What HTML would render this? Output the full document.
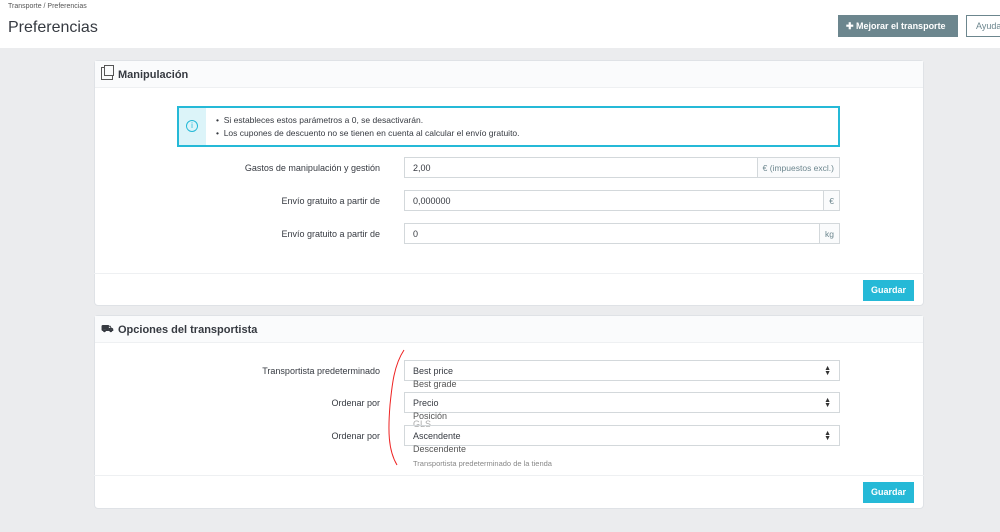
<!DOCTYPE html><html><head><style>
*{box-sizing:border-box;margin:0;padding:0}
body{width:1000px;height:532px;background:#ebecee;font-family:"Liberation Sans",sans-serif;color:#363a41;position:relative;overflow:hidden}
.abs{position:absolute}
.hdr{left:0;top:0;width:1000px;height:48px;background:#fff}
.panel{background:#fff;border:1px solid #dfe2e6;border-radius:4px;left:94px;width:830px}
.ph{position:absolute;left:0;top:0;right:0;height:27px;background:#fafbfc;border-bottom:1px solid #eef0f2;font-size:11px;font-weight:bold;padding:8px 0 0 23px}
.lbl{font-size:9px;text-align:right;width:240px;left:140px}
.inp{left:404px;width:436px;height:21px;border:1px solid #d3d8db;font-size:9px;padding:5px 8px;color:#363a41}
.addon{position:absolute;right:0;top:0;height:19px;border-left:1px solid #d3d8db;background:#fafbfc;font-size:8.5px;padding:5px 5px;color:#6c868e}
.btn{left:863px;width:51px;height:21px;background:#25b9d7;color:#fff;font-size:9px;font-weight:bold;text-align:center;line-height:21px}
.foot{left:94px;width:830px;height:1px;background:#eef0f2}
.opt{font-size:9px;color:#555;left:413px}
.arr{position:absolute;right:8px;top:5px;font-size:7px;line-height:5px;color:#333}
</style></head><body>
<div class="abs hdr"></div>
<div class="abs" style="left:8px;top:3px;font-size:7px;color:#555">Transporte / Preferencias</div>
<div class="abs" style="left:8px;top:19px;font-size:16px;color:#363a41">Preferencias</div>
<div class="abs" style="left:838px;top:15px;width:120px;height:22px;background:#6c868e;color:#fff;font-size:9px;font-weight:bold;line-height:22px;padding-left:8px">✚ Mejorar el transporte</div>
<div class="abs" style="left:966px;top:15px;width:40px;height:22px;border:1px solid #6c868e;background:#fff;color:#6c868e;font-size:9px;line-height:20px;padding-left:9px">Ayuda</div>

<div class="abs panel" style="top:60px;height:246px">
<div class="ph"><span style="position:absolute;left:6px;top:6px;width:12px;height:13px;border:1.5px solid #555"></span><span style="position:absolute;left:9px;top:4px;width:10px;height:11px;border:1.5px solid #555;background:#fafbfc"></span>Manipulación</div>
</div>
<div class="abs" style="left:177px;top:106px;width:663px;height:41px;border:2px solid #25b9d7;background:#fff"></div>
<div class="abs" style="left:179px;top:108px;width:27px;height:37px;background:#dcf4f9"></div>
<div class="abs" style="left:186px;top:120px;width:12px;height:12px;border:1.3px solid #25b9d7;border-radius:50%;font-size:8px;color:#25b9d7;text-align:center;line-height:10px">i</div>
<div class="abs" style="left:216px;top:114px;font-size:8.5px;line-height:13px;color:#363a41">• &nbsp;Si estableces estos parámetros a 0, se desactivarán.<br>• &nbsp;Los cupones de descuento no se tienen en cuenta al calcular el envío gratuito.</div>
<div class="abs lbl" style="top:163px">Gastos de manipulación y gestión</div>
<div class="abs inp" style="top:157px">2,00<span class="addon">€ (impuestos excl.)</span></div>
<div class="abs lbl" style="top:196px">Envío gratuito a partir de</div>
<div class="abs inp" style="top:190px">0,000000<span class="addon">€</span></div>
<div class="abs lbl" style="top:229px">Envío gratuito a partir de</div>
<div class="abs inp" style="top:223px">0<span class="addon">kg</span></div>
<div class="abs foot" style="top:273px"></div>
<div class="abs btn" style="top:280px">Guardar</div>

<div class="abs panel" style="top:315px;height:194px">
<div class="ph"><span style="position:absolute;left:6px;top:8px;font-size:10px">⛟</span>Opciones del transportista</div>
</div>
<div class="abs lbl" style="top:366px">Transportista predeterminado</div>
<div class="abs inp" style="top:360px">Best price<span class="arr">▲<br>▼</span></div>
<div class="abs opt" style="top:379px">Best grade</div>
<div class="abs lbl" style="top:398px">Ordenar por</div>
<div class="abs inp" style="top:392px">Precio<span class="arr">▲<br>▼</span></div>
<div class="abs opt" style="top:411px">Posición</div>
<div class="abs opt" style="top:419px;color:#aaa">GLS</div>
<div class="abs lbl" style="top:431px">Ordenar por</div>
<div class="abs inp" style="top:425px">Ascendente<span class="arr">▲<br>▼</span></div>
<div class="abs opt" style="top:444px">Descendente</div>
<div class="abs opt" style="top:459px;font-size:7.5px;color:#888">Transportista predeterminado de la tienda</div>
<svg class="abs" style="left:380px;top:345px" width="30" height="125"><path d="M24 5 C14 20 12 40 10 60 C8 85 8 105 17 120" stroke="#e22" stroke-width="1" fill="none"/></svg>
<div class="abs foot" style="top:475px"></div>
<div class="abs btn" style="top:482px">Guardar</div>
</body></html>
